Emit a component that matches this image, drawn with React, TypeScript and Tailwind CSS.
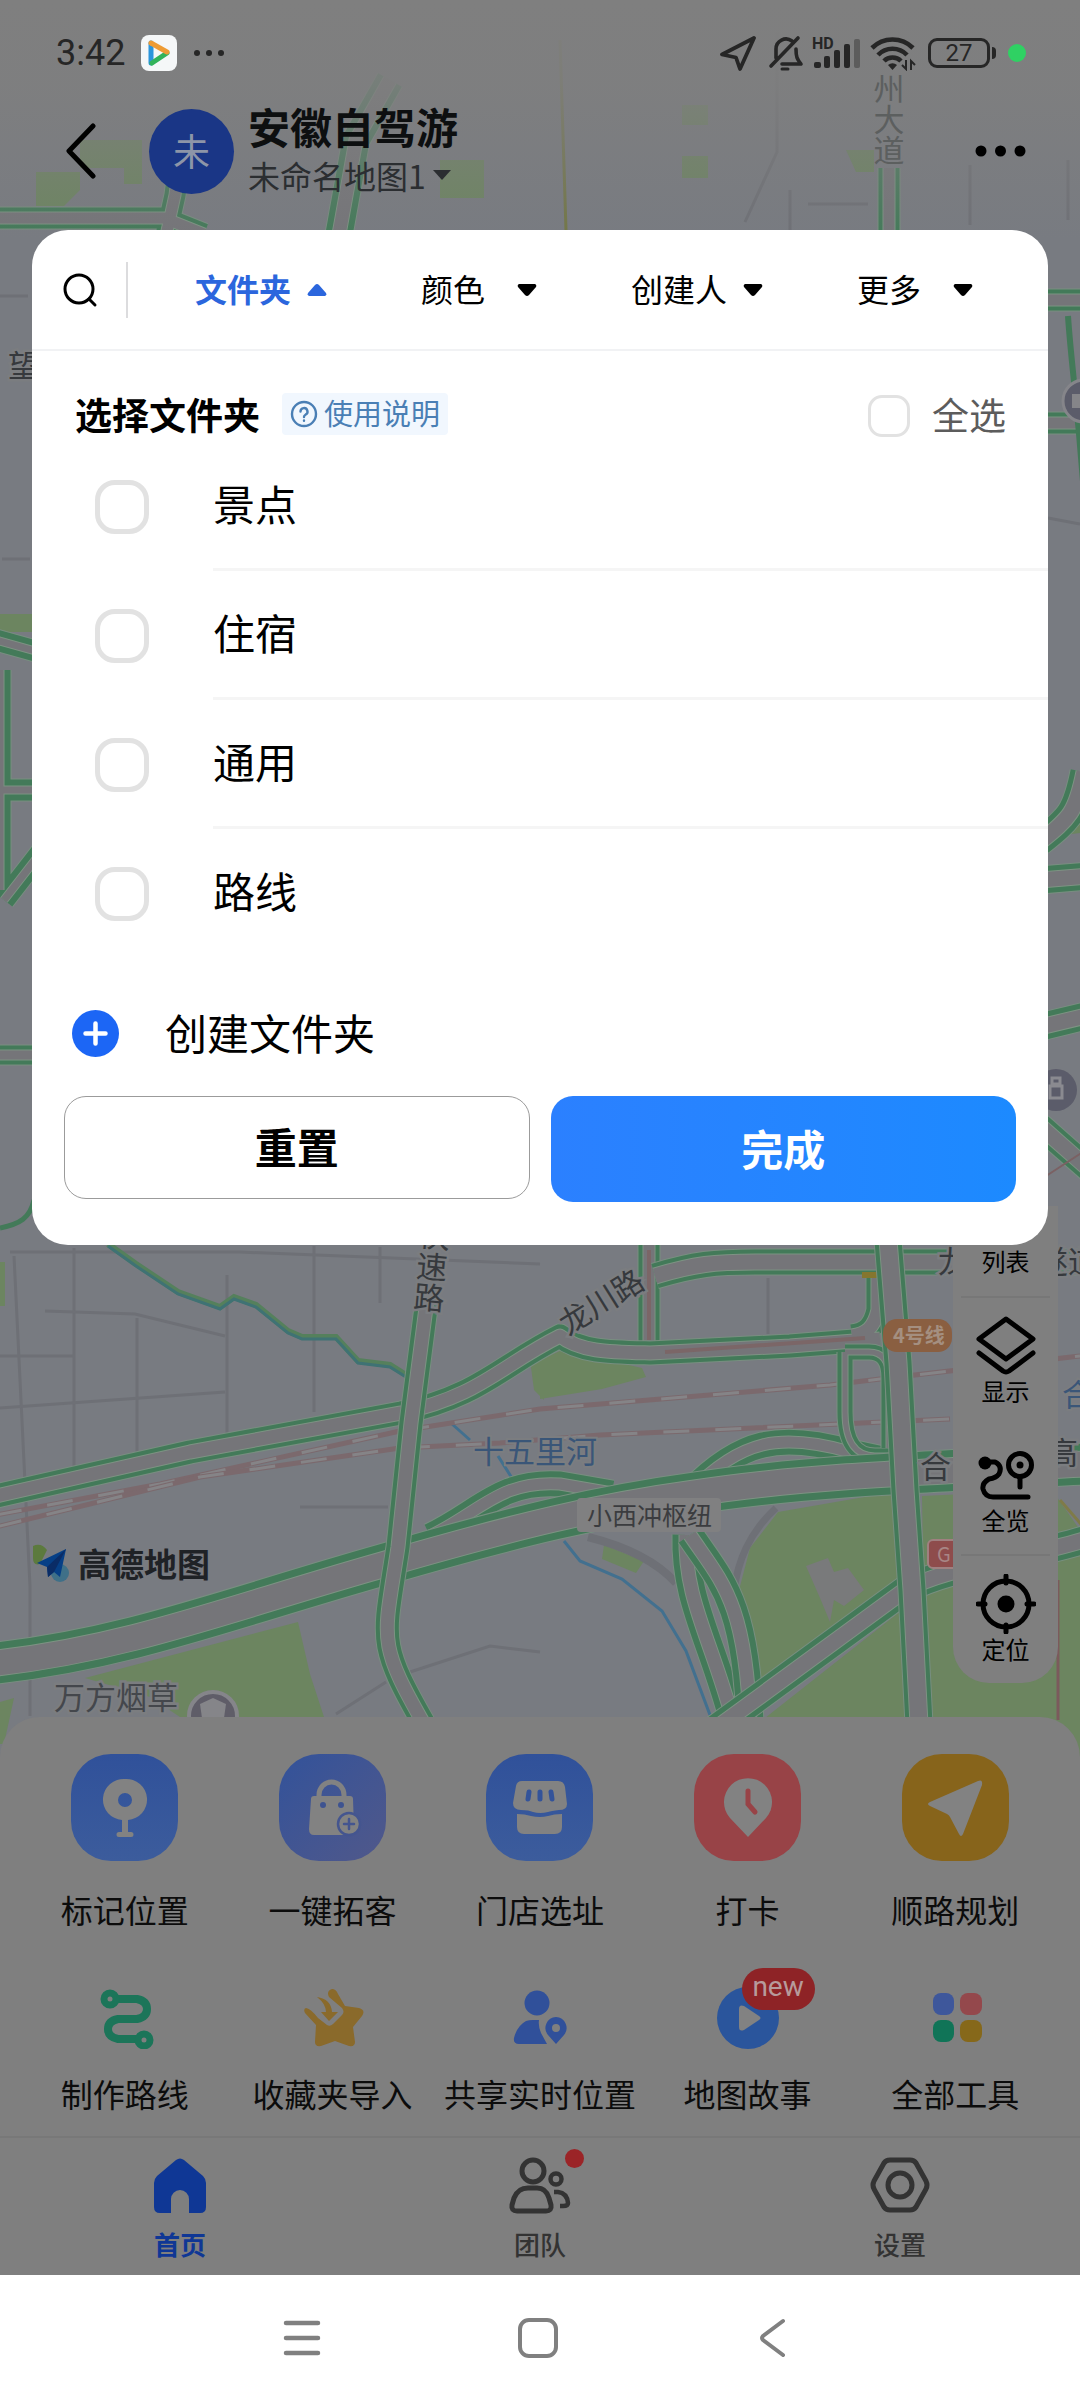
import { useState, type ReactNode } from "react";
import clsx from "clsx";

const folders = ["景点", "住宿", "通用", "路线"];

const filters = [
  { label: "文件夹", gap: "gap-4", open: true },
  { label: "颜色", gap: "gap-8", open: false },
  { label: "创建人", gap: "gap-4", open: false },
  { label: "更多", gap: "gap-8", open: false },
];

// Road drawn as stacked strokes: pale casing, green edge, pale line, grey asphalt
function Road({ d, width, edge = 4 }: { d: string; width: number; edge?: number }) {
  return (
    <g fill="none" strokeLinejoin="round">
      <path d={d} stroke="#788f80" strokeWidth={width + 3} />
      <path d={d} stroke="#437a59" strokeWidth={width + 1} />
      <path d={d} stroke="#7d9383" strokeWidth={width - edge * 2 + 1} />
      <path d={d} stroke="#757579" strokeWidth={width - edge * 2 - 1} />
    </g>
  );
}

function Rail({ d }: { d: string }) {
  return (
    <g fill="none">
      <path d={d} stroke="#7b696d" strokeWidth="5" />
      <path d={d} stroke="#858487" strokeWidth="3" strokeDasharray="26 26" />
    </g>
  );
}

function MapCanvas() {
  return (
    <svg
      className="absolute inset-x-0 top-0 h-[1780px] w-full"
      viewBox="0 0 1080 1780"
      preserveAspectRatio="xMidYMin slice"
      fontFamily="'Noto Sans CJK SC', sans-serif"
      aria-hidden="true"
    >
      <defs>
        <linearGradient id="fade" x1="0" y1="0" x2="0" y2="1">
          <stop offset="0" stopColor="#7f7f7f" />
          <stop offset="0.35" stopColor="#7f7f7f" stopOpacity="0.85" />
          <stop offset="1" stopColor="#7f7f7f" stopOpacity="0" />
        </linearGradient>
      </defs>
      <rect width="1080" height="1780" fill="#787b81" />

      <g fill="#6c8560">
        <path d="M36 172h44v18l-16 16H36zM80 140h62v44h-18v-16H80zM440 160h44v38h-44z" />
        <path d="M682 105h26v20h-26zM682 156h26v22h-26zM846 150h28v22h-18z" />
        <path d="M0 614h32v18H0zM1064 835l16-14v12zM0 1262h5v44H0z" />
        <path d="M540 1360l22-10 80 18 4 9-44 12-62 10zM530 1360l14-6v46l-10-10z" />
        <path d="M85 1678l213-56 12 52 14 43H180l-30-20z" />
        <path d="M604 1545l40 16-8 12-34-14z" />
        <path d="M778 1512l115-20 10 88-145 112-20-98 12-46z" />
        <path d="M765 1718l142-112 12 112zM922 1496l130-6 28 40v190H926z" />
        <path d="M1040 1700h40v70h-40zM0 1702l14-4-10 46H0z" />
      </g>
      <path d="M806 1566l22-8 6 14 14-4 16 22-20 16-10-6-4 22-10-24z" fill="#797a7b" />

      <g fill="none" stroke="#6e7076" strokeWidth="3">
        <path d="M14 1256l16 330 0 130M74 1248v220M137 1318v142M227 1275v165M314 1246v166M380 1247v56M768 1278v56" />
        <path d="M10 1252l230 0 300 12M45 1311l90 3 90 22M0 1408l225-16M0 1356h74M300 1507h88M410 1672l80-26 50 6M336 1714l50-32" />
        <path d="M777 32v120l-32 70M790 190v40M970 165v60M1068 160v60M808 204h60M0 296h28M2 559h28M1048 518l32 6" />
        <path d="M776 1508c-28 26-38 54-42 82" strokeWidth="7" />
        <path d="M588 1537c40 10 70 26 88 46" strokeWidth="8" />
      </g>

      <g fill="none">
        <path
          d="M108 1244l28 20 42 28 42 15 14-10 22 8 32 26 14 6 34 0 22 24 32 4 16 10"
          stroke="#55805c"
          strokeWidth="6"
        />
        <path
          d="M108 1246l28 20 42 28 42 15 14-10 22 8 32 26 14 6 34 0 22 24 32 4 16 10"
          stroke="#3f7274"
          strokeWidth="3"
        />
        <path
          d="M564 1541l16 20 42 18 40 32 24 40 24 64M452 1424l18 16M498 1456l14 22"
          stroke="#42708f"
          strokeWidth="3"
        />
      </g>

      <path d="M560 40l6 190" stroke="#737747" strokeWidth="3" fill="none" />

      <Rail d="M-4 1515L160 1484L400 1431L540 1409L830 1385L880 1379L1080 1356" />
      <Rail d="M-4 1527L200 1477L400 1448L500 1443L600 1435L950 1419" />

      {/* arterials */}
      <Road d="M-4 218h168l40 16M165 240l10-45 5-40" width={20} />
      <Road d="M338 240l18-100 34-60" width={26} edge={6} />
      <Road d="M889 168v75" width={20} />
      <Road d="M1046 300h40M1046 423h40" width={20} />
      <path d="M1068 316c4 60 12 100 20 240" fill="none" stroke="#437a59" strokeWidth="6" />
      <Road d="M1040 842c30-24 36-30 44-70M1040 880l50-4M1040 1027l50-12" width={26} edge={5} />
      <Road d="M1040 1126l50 44" width={24} />
      <Road d="M-4 640l50 14M-4 790h50M4 900L46 846M0 670v220" width={20} edge={6} />
      <Road d="M-4 1055h50" width={18} />
      <path d="M0 1228c20-4 30-10 34-28" fill="none" stroke="#437a59" strokeWidth="5" />
      <path d="M1042 360v700M1040 1180l46-30" stroke="#7b6163" strokeWidth="2" fill="none" />

      <Road d="M649 1240v112" width={20} />
      <Road d="M655 1276c40-12 60-14 100-14h330" width={24} />
      <Road d="M878 1272v38c-4 18-12 24-26 26M-4 1496L190 1452L401 1413C480 1396 500 1366 560 1336C580 1352 610 1352 650 1353L790 1346L880 1339" width={22} />
      <path d="M649 1250v90M665 1352l200-14" stroke="#7b6667" strokeWidth="4" fill="none" />
      <path d="M862 1272h16v6h-16z" fill="#85762f" />
      <Road d="M430 1536C480 1512 500 1480 560 1484L612 1493" width={24} edge={6} />
      <Road d="M690 1492C740 1440 780 1432 850 1452L906 1464" width={24} edge={6} />
      <Road d="M845 1352v60q0 44 30 44h20M845 1352h24q20 0 20 26v70" width={14} />
      <Road d="M-4 1663C130 1648 230 1608 382 1565C520 1525 600 1506 695 1493C800 1477 900 1473 1084 1464" width={40} edge={7} />
      <Road d="M686 1535C684 1600 712 1640 734 1724" width={26} edge={6} />
      <Road d="M690 1535C720 1580 746 1600 750 1724" width={26} edge={6} />
      <Road d="M700 1740L905 1590C950 1566 1010 1562 1084 1540" width={26} edge={5} />
      <Road d="M427 1300L411 1423L398 1547C384 1640 376 1640 424 1724" width={22} />
      <Road d="M888 1240L898 1363L905 1490L912 1590L919 1724" width={26} />
      <path d="M1060 1500l26 30" stroke="#7f7b48" strokeWidth="3" />
      <path d="M1058 1580v140" stroke="#7b5a5c" strokeWidth="3" />

      <rect width="1080" height="240" fill="url(#fade)" />

      {/* labels and points of interest */}
      <g fontSize="31" fill="#36393d" stroke="#7b7d80" strokeWidth="5" paintOrder="stroke">
        <text x="432" y="1220" transform="rotate(5 432 1267)" style={{ writingMode: "vertical-rl" }}>快速路</text>
        <text transform="translate(568 1336) rotate(-32)">龙川路</text>
        <text x="938" y="1273">龙</text>
        <text x="1037" y="1273">遂道</text>
        <text x="8" y="377">望</text>
        <text x="54" y="1709" fill="#44474c">万方烟草</text>
        <text x="1047" y="1464">高</text>
        <text x="920" y="1478">合</text>
      </g>
      <text x="889" y="73" fontSize="31" fill="#5c5f5f" style={{ writingMode: "vertical-rl" }}>州大道</text>
      <g fontSize="31" fill="#3a5678" stroke="#7b7d80" strokeWidth="4" paintOrder="stroke">
        <text x="473" y="1463">十五里河</text>
        <text x="1062" y="1406">合</text>
      </g>
      <rect x="577" y="1498" width="144" height="34" rx="4" fill="#808081" />
      <text x="587" y="1525" fontSize="25" fill="#3b3c3f">小西冲枢纽</text>
      <rect x="883" y="1319" width="69" height="33" rx="14" fill="#8a5f41" />
      <text x="893" y="1343" fontSize="20" fontWeight="700" fill="#a48f80">4号线</text>
      <rect x="928" y="1540" width="40" height="28" rx="5" fill="#8e4c4c" stroke="#a08080" strokeWidth="2" />
      <text x="937" y="1562" fontSize="20" fill="#a88686">G</text>
      <circle cx="213" cy="1716" r="24" fill="#5f5d68" stroke="#85858a" strokeWidth="4" />
      <path d="M200 1704l13-6 13 6-2 14h-22z" fill="#858589" />
      <circle cx="1084" cy="401" r="21" fill="#5b5c6a" stroke="#85858a" strokeWidth="3" />
      <path d="M1072 394h10v14h-10z" fill="#858589" />
      <circle cx="1056" cy="1090" r="21" fill="#5b5c6a" />
      <path d="M1050 1098v-12h12v12zM1052 1084v-6h8v6z" fill="none" stroke="#8a8a90" strokeWidth="3" />
    </svg>
  );
}

function StatusBar() {
  return (
    <div className="flex h-[106px] items-center pr-[54px] pl-14 text-[#262626]">
      <span className="font-[Roboto] text-[36px] leading-none">3:42</span>
      <svg className="ml-4 size-9" viewBox="0 0 36 36" aria-hidden="true">
        <rect width="36" height="36" rx="8" fill="#f5f7f8" />
        <path d="M10 8v20" stroke="#2b95dc" strokeWidth="5" strokeLinecap="round" />
        <path d="M11 28l15-10" stroke="#32b35a" strokeWidth="5" strokeLinecap="round" />
        <path d="M10 8l16 9" stroke="#ee9b34" strokeWidth="5" strokeLinecap="round" />
      </svg>
      <svg className="ml-4 h-2 w-8" viewBox="0 0 32 8" fill="currentColor" aria-hidden="true">
        <circle cx="4" cy="4" r="3" />
        <circle cx="16" cy="4" r="3" />
        <circle cx="28" cy="4" r="3" />
      </svg>

      <div className="ml-auto flex items-center">
        <svg className="size-9" viewBox="0 0 36 36" fill="none" stroke="currentColor" strokeWidth="3.8" strokeLinejoin="round" aria-hidden="true">
          <path d="M34 3L2 19.500l14 3L20 34z" />
        </svg>
        <svg className="ml-3 size-9" viewBox="0 0 36 36" fill="none" stroke="currentColor" strokeWidth="3.6" strokeLinecap="round" strokeLinejoin="round" aria-hidden="true">
          <path d="M8 23V14a10 10 0 0 1 16-8M28 14c0 8 1 10 5 15H14M3 31L30 3" />
          <path d="M14 34h6" strokeWidth="3" />
        </svg>
        <svg className="ml-2 h-9 w-[50px]" viewBox="0 0 50 36" fill="currentColor" aria-hidden="true">
          <text x="0" y="14" fontSize="16" fontWeight="700" fontFamily="Roboto, sans-serif">HD</text>
          <rect x="2" y="27" width="7" height="6" rx="2" />
          <rect x="12" y="21" width="6" height="12" rx="2" />
          <rect x="22" y="15" width="6" height="18" rx="2" />
          <rect x="32" y="9" width="6" height="24" rx="2" />
          <rect x="42" y="4" width="6" height="29" rx="2" fill="#5c5c5c" />
        </svg>
        <svg className="ml-2 h-9 w-[46px]" viewBox="0 0 46 36" fill="none" stroke="currentColor" strokeWidth="4.6" aria-hidden="true">
          <path d="M2 13a29 29 0 0 1 41 0M8 20a20 20 0 0 1 29 0M14 26a12 12 0 0 1 17 0" />
          <path d="M18 30a7 7 0 0 1 9 0l-4.500 5z" fill="currentColor" stroke="none" />
          <path d="M36 25v9l-4-4M41 35v-9l4 4" strokeWidth="2" />
        </svg>
        <div className="ml-3 flex h-[30px] w-[62px] items-center justify-center rounded-[9px] border-3 border-current font-[Roboto] text-[24px] leading-none">
          27
        </div>
        <div className="ml-0.5 h-3 w-1 rounded-r bg-current" />
        <div className="ml-3 size-[18px] rounded-full bg-[#2fd163]" />
      </div>
    </div>
  );
}

function Header() {
  return (
    <header className="flex h-[90px] items-center pr-[54px] pl-[66px]">
      <button type="button" aria-label="返回" className="text-black">
        <svg className="h-14 w-8" viewBox="0 0 32 56" fill="none" stroke="currentColor" strokeWidth="5" strokeLinecap="round" strokeLinejoin="round">
          <path d="M27 3L3 28l24 25" />
        </svg>
      </button>
      <div className="ml-[51px] flex size-[85px] items-center justify-center rounded-full bg-[#1a3686] text-[37px] text-[#8d95a8]">
        未
      </div>
      <div className="ml-[14px] pb-1">
        <h1 className="text-[42px] leading-[52px] font-bold text-[#0d0f10]">安徽自驾游</h1>
        <button type="button" className="flex items-center gap-1.5 text-[32px] leading-[46px] text-[#2b2e31]">
          未命名地图1
          <svg className="h-3 w-5" viewBox="0 0 20 12" fill="currentColor" aria-hidden="true">
            <path d="M1 1h18l-9 10z" />
          </svg>
        </button>
      </div>
      <button type="button" aria-label="更多操作" className="ml-auto text-black">
        <svg className="h-3 w-[51px]" viewBox="0 0 51 12" fill="currentColor">
          <circle cx="6" cy="6" r="5.500" />
          <circle cx="25.500" cy="6" r="5.500" />
          <circle cx="45" cy="6" r="5.500" />
        </svg>
      </button>
    </header>
  );
}

const boxClass = "shrink-0 appearance-none border-[#e2e2e2] bg-white checked:border-[#1c66f5] checked:bg-[#1c66f5]";

function FolderPanel() {
  const [selected, setSelected] = useState<string[]>([]);

  const toggle = (name: string) => {
    setSelected((prev) => (prev.includes(name) ? prev.filter((n) => n !== name) : [...prev, name]));
  };

  return (
    <section className="relative z-10 mx-8 mt-[34px] rounded-[36px] bg-white pb-[43px] text-black">
      <div className="flex h-[121px] items-center border-b-2 border-[#f1f2f4] pr-6 pl-[30px]">
        <button type="button" aria-label="搜索">
          <svg className="size-9" viewBox="0 0 36 36" fill="none" stroke="currentColor" strokeWidth="3" strokeLinecap="round">
            <circle cx="17" cy="17" r="14" />
            <path d="M27 27l6 6" />
          </svg>
        </button>
        <div className="ml-7 h-14 w-0.5 bg-[#dcdcde]" />
        <div className="ml-6 grid flex-1 grid-cols-4">
          {filters.map((f) => (
            <button
              key={f.label}
              type="button"
              aria-expanded={f.open}
              className={clsx(
                "flex items-center justify-center text-[32px] leading-[48px]",
                f.gap,
                f.open && "font-bold text-[#2b66dd]",
              )}
            >
              <span className="pb-1">{f.label}</span>
              <svg className={clsx("h-3 w-5", f.open && "rotate-180")} viewBox="0 0 20 12" fill="currentColor" aria-hidden="true">
                <path d="M2 0h16q2 1 1 3l-7 8q-2 2-4 0L1 3Q0 1 2 0z" />
              </svg>
            </button>
          ))}
        </div>
      </div>

      <div className="flex h-[91px] items-center pt-[38px] pr-[42px] pl-[43px]">
        <h2 className="pb-1 text-[37px] leading-[44px] font-bold">选择文件夹</h2>
        <a href="#help" className="mb-1 ml-[22px] flex items-center gap-1.5 rounded bg-[#f1f7fe] px-2 text-[29px] leading-[42px] text-[#4a7fb5]">
          <svg className="size-7" viewBox="0 0 28 28" fill="none" stroke="currentColor" strokeWidth="2.400" strokeLinecap="round" aria-hidden="true">
            <circle cx="14" cy="14" r="12" />
            <path d="M10.500 11.500a3.500 3.500 0 1 1 5 3.200q-1.500.8-1.500 2.300M14 20.500v.2" />
          </svg>
          <span className="pb-1 leading-[38px]">使用说明</span>
        </a>
        <label className="ml-auto flex items-center gap-[22px] text-[37px] leading-[44px] text-[#5c5c5c]">
          <input
            type="checkbox"
            className={clsx(boxClass, "size-[42px] rounded-[14px] border-3")}
            checked={selected.length === folders.length}
            onChange={(e) => setSelected(e.target.checked ? folders : [])}
          />
          <span className="pb-1">全选</span>
        </label>
      </div>

      <ul>
        {folders.map((name) => (
          <li key={name} className="group pl-[63px]">
            <label className="flex items-center gap-[64px]">
              <input
                type="checkbox"
                className={clsx(boxClass, "size-[54px] rounded-[20px] border-5")}
                checked={selected.includes(name)}
                onChange={() => toggle(name)}
              />
              <span className="flex h-[129px] flex-1 items-center border-b-3 border-[#f5f5f5] pb-1 text-[42px] leading-none group-last:border-transparent">
                {name}
              </span>
            </label>
          </li>
        ))}
      </ul>

      <button type="button" className="flex h-[138px] w-full items-center gap-[46px] pt-3 pl-10 text-[42px]">
        <svg className="size-[47px]" viewBox="0 0 47 47" aria-hidden="true">
          <circle cx="23.500" cy="23.500" r="23.500" fill="#1c66f5" />
          <path d="M23.500 13.500v20M13.500 23.500h20" stroke="#fff" strokeWidth="4.500" strokeLinecap="round" />
        </svg>
        <span className="pb-1">创建文件夹</span>
      </button>

      <div className="grid grid-cols-2 gap-[21px] px-8 text-[42px] font-bold">
        <button type="button" className="h-[103px] rounded-[22px] border border-[#9b9b9b] pb-1" onClick={() => setSelected([])}>
          重置
        </button>
        <button type="button" className="h-[106px] rounded-[22px] bg-linear-to-r from-[#2b80ff] to-[#1c8aff] pb-1 text-white">
          完成
        </button>
      </div>
    </section>
  );
}

function ToolbarItem({ label, border, children }: { label: string; border?: boolean; children: ReactNode }) {
  return (
    <button
      type="button"
      className={clsx(
        "mx-2 flex h-[129px] flex-col items-center border-t-2 pt-[18px] leading-[30px]",
        border ? "border-[#777777]" : "border-transparent",
      )}
    >
      <svg className="size-[60px]" viewBox="0 0 60 60" fill="none" stroke="currentColor" strokeWidth="5" strokeLinecap="round" strokeLinejoin="round" aria-hidden="true">
        {children}
      </svg>
      {label}
    </button>
  );
}

function MapControls() {
  return (
    <div className="relative flex flex-1 items-end justify-between pr-[22px] pl-8">
      <div className="mb-[133px] flex items-center gap-2 text-[33px] leading-[42px] text-[#1f2226]">
        <svg className="size-[38px]" viewBox="0 0 38 38" aria-hidden="true">
          <path d="M1 2q8-4 14 4L8 20q-7 2-7-6z" fill="#5c7a3e" />
          <circle cx="28" cy="29" r="9" fill="#3f7088" />
          <path d="M34 5L5 19l10 4 1 10 6-5 6 5z" fill="#063f86" />
          <path d="M34 5L15 23l1 10 6-5z" fill="#0a2c66" />
        </svg>
        <span className="font-bold">高德地图</span>
      </div>
      <div className="-mt-10 mb-[34px] flex w-[105px] flex-col rounded-b-[36px] bg-[#7f7f7f] text-[24px] text-black">
        <button type="button" className="pt-10 pb-5 leading-[30px]">
          列表
        </button>
        <ToolbarItem label="显示" border>
          <path d="M30 3L57 23 30 43 3 23zM3 37l24 18q3 2 6 0l24-18" />
        </ToolbarItem>
        <ToolbarItem label="全览">
          <circle cx="9" cy="18" r="6.500" fill="currentColor" stroke="none" />
          <path d="M10 17h9q8 4 4 12-3 4-10 5-7 4-6 10 2 8 10 8h35" />
          <circle cx="44" cy="20" r="11.500" />
          <circle cx="44" cy="20" r="3.500" fill="currentColor" stroke="none" />
          <path d="M44 33v9" />
        </ToolbarItem>
        <ToolbarItem label="定位" border>
          <circle cx="30" cy="30" r="23" />
          <circle cx="30" cy="30" r="8.500" fill="currentColor" stroke="none" />
          <path d="M30 2v7M30 51v7M2 30h7M51 30h7" />
        </ToolbarItem>
      </div>
    </div>
  );
}

function Tile({ label, bg, children }: { label: string; bg: string; children: ReactNode }) {
  return (
    <button type="button" className="flex flex-col items-center gap-7">
      <span className={clsx("flex size-[107px] items-center justify-center rounded-[40px]", bg)}>
        <svg className="size-[64px] text-[#828282]" viewBox="0 0 64 64" fill="currentColor" aria-hidden="true">
          {children}
        </svg>
      </span>
      {label}
    </button>
  );
}

function Tool({ label, badge, children }: { label: string; badge?: string; children: ReactNode }) {
  return (
    <button type="button" className="flex flex-col items-center gap-6 whitespace-nowrap">
      <span className="relative">
        <svg className="size-16" viewBox="0 0 64 64" aria-hidden="true">
          {children}
        </svg>
        {badge && (
          <span className="absolute -top-[17px] left-[26px] flex h-[42px] w-[73px] items-center justify-center rounded-full bg-[#8e2326] pb-1 font-[Roboto] text-[28px] leading-none text-[#b79b9b]">
            {badge}
          </span>
        )}
      </span>
      {label}
    </button>
  );
}

function ToolSheet() {
  return (
    <section className="relative rounded-t-[40px] bg-[#7f7f7f] pt-[37px] pb-[23px] text-[32px] leading-10 text-[#0c0c0c]">
      <div className="grid grid-cols-5 px-[21px]">
        <Tile label="标记位置" bg="bg-linear-to-b from-[#30519a] to-[#3c5c9c]">
          <path fillRule="evenodd" d="M32 3a20.500 20.500 0 0 1 3 41v12h3q2.500 0 2.500 2.500T38 61H26q-2.500 0-2.500-2.500T26 56h3V44a20.500 20.500 0 0 1 3-41zm0 14a7 7 0 1 0 0 14 7 7 0 0 0 0-14z" />
        </Tile>
        <Tile label="一键拓客" bg="bg-linear-to-br from-[#32529a] to-[#50588a]">
          <path d="M19 25v-6a12.500 13 0 0 1 25 0v6" fill="none" stroke="currentColor" strokeWidth="5" />
          <path d="M14 20h36q3 0 3 3l1 30q0 6-5 6H14q-5 0-5-6l2-30q0-3 3-3z" />
          <circle cx="23" cy="29" r="3" fill="#3e5390" />
          <circle cx="41" cy="29" r="3" fill="#3e5390" />
          <circle cx="49" cy="48" r="11" stroke="#44558f" strokeWidth="2.500" />
          <path d="M49 43v10M44 48h10" stroke="#44558f" strokeWidth="2.500" strokeLinecap="round" />
        </Tile>
        <Tile label="门店选址" bg="bg-linear-to-b from-[#30519a] to-[#3c5c9c]">
          <path d="M14 5h36q6 0 7 6l2 17q0 6-8 6-8 1-11 2-8 2-15 0-4-2-12-2-8 0-8-7l3-17q1-5 6-5z" />
          <path d="M9 38q8 0 14 2 9 2 17 0 6-2 14-2v13q0 7-7 7H16q-7 0-7-7z" />
          <path d="M21 16l-1 7M32 16v7M43 16l1 7" stroke="#33539a" strokeWidth="5" strokeLinecap="round" />
        </Tile>
        <Tile label="打卡" bg="bg-[#984347]">
          <path d="M32 61L14 42a24 24 0 1 1 36 0z" />
          <path d="M32 15v13l7 8" fill="none" stroke="#984347" strokeWidth="5" strokeLinecap="round" />
        </Tile>
        <Tile label="顺路规划" bg="bg-[#87641b]">
          <path d="M55 5q5-2 4 4L40 58q-2 4-4 0l-9-17q-1-2-3-3L7 30q-4-2 0-4z" />
        </Tile>
      </div>
      <div className="mt-14 grid grid-cols-5 px-[21px]">
        <Tool label="制作路线">
          <g fill="none" stroke="#1c7559" strokeWidth="7">
            <path d="M23 14h21q10 2 10 10t-10 10H25q-10 2-10 10t10 10h20" strokeWidth="8" />
            <circle cx="17" cy="14" r="6" />
            <circle cx="51" cy="55" r="6" />
          </g>
        </Tool>
        <Tool label="收藏夹导入">
          <path d="M32 4q4 0 6 5l7 12 14 2q7 2 3 8l-9 11 2 15q0 5-6 4l-14-5-14 5q-6 1-6-4l1-17L5 28q-2-4 1-5 4 0 12 10l9 7q3 2 6-1l9-9q3-3 0-7L29 12q-3-6 3-8z" fill="#8a6a2b" />
          <path d="M17 12q14 2 15 15h6L29 36l-8-9h5q0-8-9-15z" fill="#8a6a2b" />
        </Tool>
        <Tool label="共享实时位置">
          <g fill="#30509a">
            <circle cx="29" cy="18" r="12.500" />
            <path d="M25 35h6q-1 6 2 13l6 11H11q-6 0-5-6 3-12 12-17 3-1 7-1z" />
            <path fillRule="evenodd" d="M48 32a11 11 0 0 1 8 18l-8 9-8-9a11 11 0 0 1 8-18zm0 7a4 4 0 1 0 0 8 4 4 0 0 0 0-8z" />
          </g>
        </Tool>
        <Tool label="地图故事" badge="new">
          <circle cx="32" cy="33" r="31" fill="#2a559c" />
          <path d="M23 24q0-5 5-3l15 10q3 2 0 4L28 45q-5 2-5-3z" fill="#828282" />
        </Tool>
        <Tool label="全部工具">
          <rect x="10" y="8" width="21" height="22" rx="8" fill="#3e579b" />
          <rect x="37" y="8" width="22" height="22" rx="8" fill="#94484c" />
          <rect x="10" y="35" width="21" height="22" rx="8" fill="#107457" />
          <rect x="37" y="35" width="22" height="22" rx="8" fill="#86681a" />
        </Tool>
      </div>
    </section>
  );
}

function NavItem({ label, active, dot, children }: { label: string; active?: boolean; dot?: boolean; children: ReactNode }) {
  return (
    <a
      href="#nav"
      aria-current={active ? "page" : undefined}
      className={clsx("flex flex-col items-center gap-2", active ? "font-bold text-[#0f3795]" : "font-medium text-[#333333]")}
    >
      <span className="relative">
        <svg className="size-16" viewBox="0 0 64 64" fill="none" stroke="currentColor" strokeWidth="5" strokeLinejoin="round" aria-hidden="true">
          {children}
        </svg>
        {dot && <span className="absolute -top-1 -right-3 size-[19px] rounded-full bg-[#9b2427]" />}
      </span>
      {label}
    </a>
  );
}

function BottomNav() {
  return (
    <nav className="relative grid h-[139px] grid-cols-3 border-t-2 border-[#787878] bg-[#7f7f7f] pt-[15px] text-[26px] leading-[38px]">
      <NavItem label="首页" active>
        <path d="M28 7q4-3 8 0l19 16q3 3 3 7v24q0 6-6 6H41V46a9 9 0 0 0-18 0v14H12q-6 0-6-6V30q0-4 3-7z" fill="currentColor" stroke="none" />
      </NavItem>
      <NavItem label="团队" dot>
        <circle cx="25" cy="18" r="11" />
        <path d="M20 35h9q9 0 12 10l2 7q1 6-5 6H9q-6 0-5-6l2-7q4-10 14-10z" />
        <circle cx="48" cy="26" r="5.500" strokeWidth="4.500" />
        <path d="M46 39h4q9 1 10 11 0 3-5 3h-3" strokeWidth="4.500" />
      </NavItem>
      <NavItem label="设置">
        <path d="M22 7h20q4 0 6 3l10 18q2 4 0 8L48 54q-2 3-6 3H22q-4 0-6-3L6 36q-2-4 0-8l10-18q2-3 6-3z" />
        <circle cx="32" cy="32" r="12" />
      </NavItem>
    </nav>
  );
}

function SystemNav() {
  return (
    <div className="relative flex h-[126px] items-center justify-center bg-white pr-1 text-[#808080]">
      <button type="button" aria-label="最近任务" className="flex w-[236px] justify-center">
        <svg className="size-10" viewBox="0 0 40 40" fill="none" stroke="currentColor" strokeWidth="4.500" strokeLinecap="round">
          <path d="M4 5h32M4 20h32M4 35h32" />
        </svg>
      </button>
      <button type="button" aria-label="主屏幕" className="flex w-[236px] justify-center">
        <svg className="size-10" viewBox="0 0 40 40" fill="none" stroke="currentColor" strokeWidth="4">
          <rect x="2" y="2" width="36" height="36" rx="9" />
        </svg>
      </button>
      <button type="button" aria-label="后退" className="flex w-[236px] justify-center">
        <svg className="size-10" viewBox="0 0 40 40" fill="none" stroke="currentColor" strokeWidth="4" strokeLinecap="round" strokeLinejoin="round">
          <path d="M29 3L9 18q-2 2 0 4l20 15" />
        </svg>
      </button>
    </div>
  );
}

export default function App() {
  return (
    <main className="relative flex min-h-screen flex-col overflow-hidden bg-[#7f7f7f] font-['Noto_Sans_CJK_SC',sans-serif]">
      <MapCanvas />
      <div className="relative flex flex-1 flex-col">
        <StatusBar />
        <Header />
        <FolderPanel />
        <MapControls />
        <ToolSheet />
        <BottomNav />
        <SystemNav />
      </div>
    </main>
  );
}
